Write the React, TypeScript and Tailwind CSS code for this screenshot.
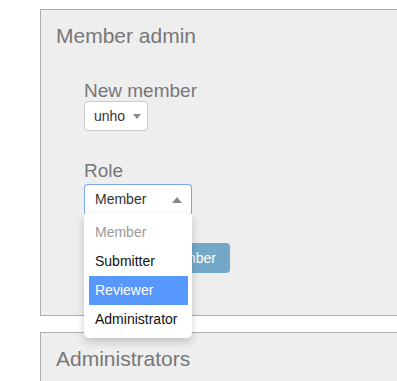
const font = { fontFamily: '"Liberation Sans", Arial, sans-serif' };

const roles = ['Member', 'Submitter', 'Reviewer', 'Administrator'];

export default function App() {
  return (
    <div className="relative h-[381px] w-[397px] overflow-hidden bg-white" style={font}>
      <div className="pl-[40px] pt-[9px]">
        {/* Member admin panel */}
        <div className="relative h-[307px] w-[400px] border border-[#adadad] bg-[#eeeeee] px-[15px]">
          <h2 className="pt-[14px] text-[21px] leading-[24px] text-[#777777]">Member admin</h2>

          <div className="ml-[28px] mt-[32px]">
            <label className="block text-[19px] leading-[22px] text-[#777777]">New member</label>
            <div className="mt-[-1px] flex h-[30px] w-[64px] items-center rounded-[4px] border border-[#cccccc] bg-white pl-[9px] text-[14px] text-[#333333]">
              unho
              <span className="ml-[8px] inline-block h-0 w-0 border-x-[4px] border-t-[5px] border-x-transparent border-t-[#888888]" />
            </div>

            <label className="mt-[29px] block text-[19px] leading-[22px] text-[#777777]">Role</label>
            <div className="relative w-[108px]">
              <div className="mt-[2px] flex h-[30px] items-center justify-between rounded-t-[4px] border border-b-0 border-[#7ca5ea] bg-white pl-[10px] pr-[9px] text-[14px] text-[#333333]">
                Member
                <span className="inline-block h-0 w-0 border-x-[5px] border-b-[6px] border-x-transparent border-b-[#888888]" />
              </div>
            </div>

            <button className="mt-[29px] h-[30px] w-[146px] rounded-[4px] bg-[#74a8c9] pr-[14px] text-right text-[14px] text-white">
              Add new member
            </button>
          </div>
        </div>

        {/* Administrators panel */}
        <div className="mt-[16px] h-[60px] w-[400px] border border-[#adadad] bg-[#eeeeee] px-[15px]">
          <h2 className="pt-[14px] text-[21px] leading-[24px] text-[#777777]">Administrators</h2>
        </div>
      </div>

      {/* Open dropdown list */}
      <div className="absolute left-[84px] top-[214px] w-[108px] rounded-b-[5px] bg-white pb-[4px] pl-[5px] pr-[4px] pt-[4px] shadow-[0_4px_8px_rgba(0,0,0,0.18)]">
        {roles.map((r, i) => (
          <div
            key={r}
            className={
              'flex h-[29px] items-center pl-[6px] text-[14px] ' +
              (i === 0 ? 'text-[#999999]' : i === 2 ? 'bg-[#5897fb] text-white' : 'text-[#111111]')
            }
          >
            {r}
          </div>
        ))}
      </div>
    </div>
  );
}
